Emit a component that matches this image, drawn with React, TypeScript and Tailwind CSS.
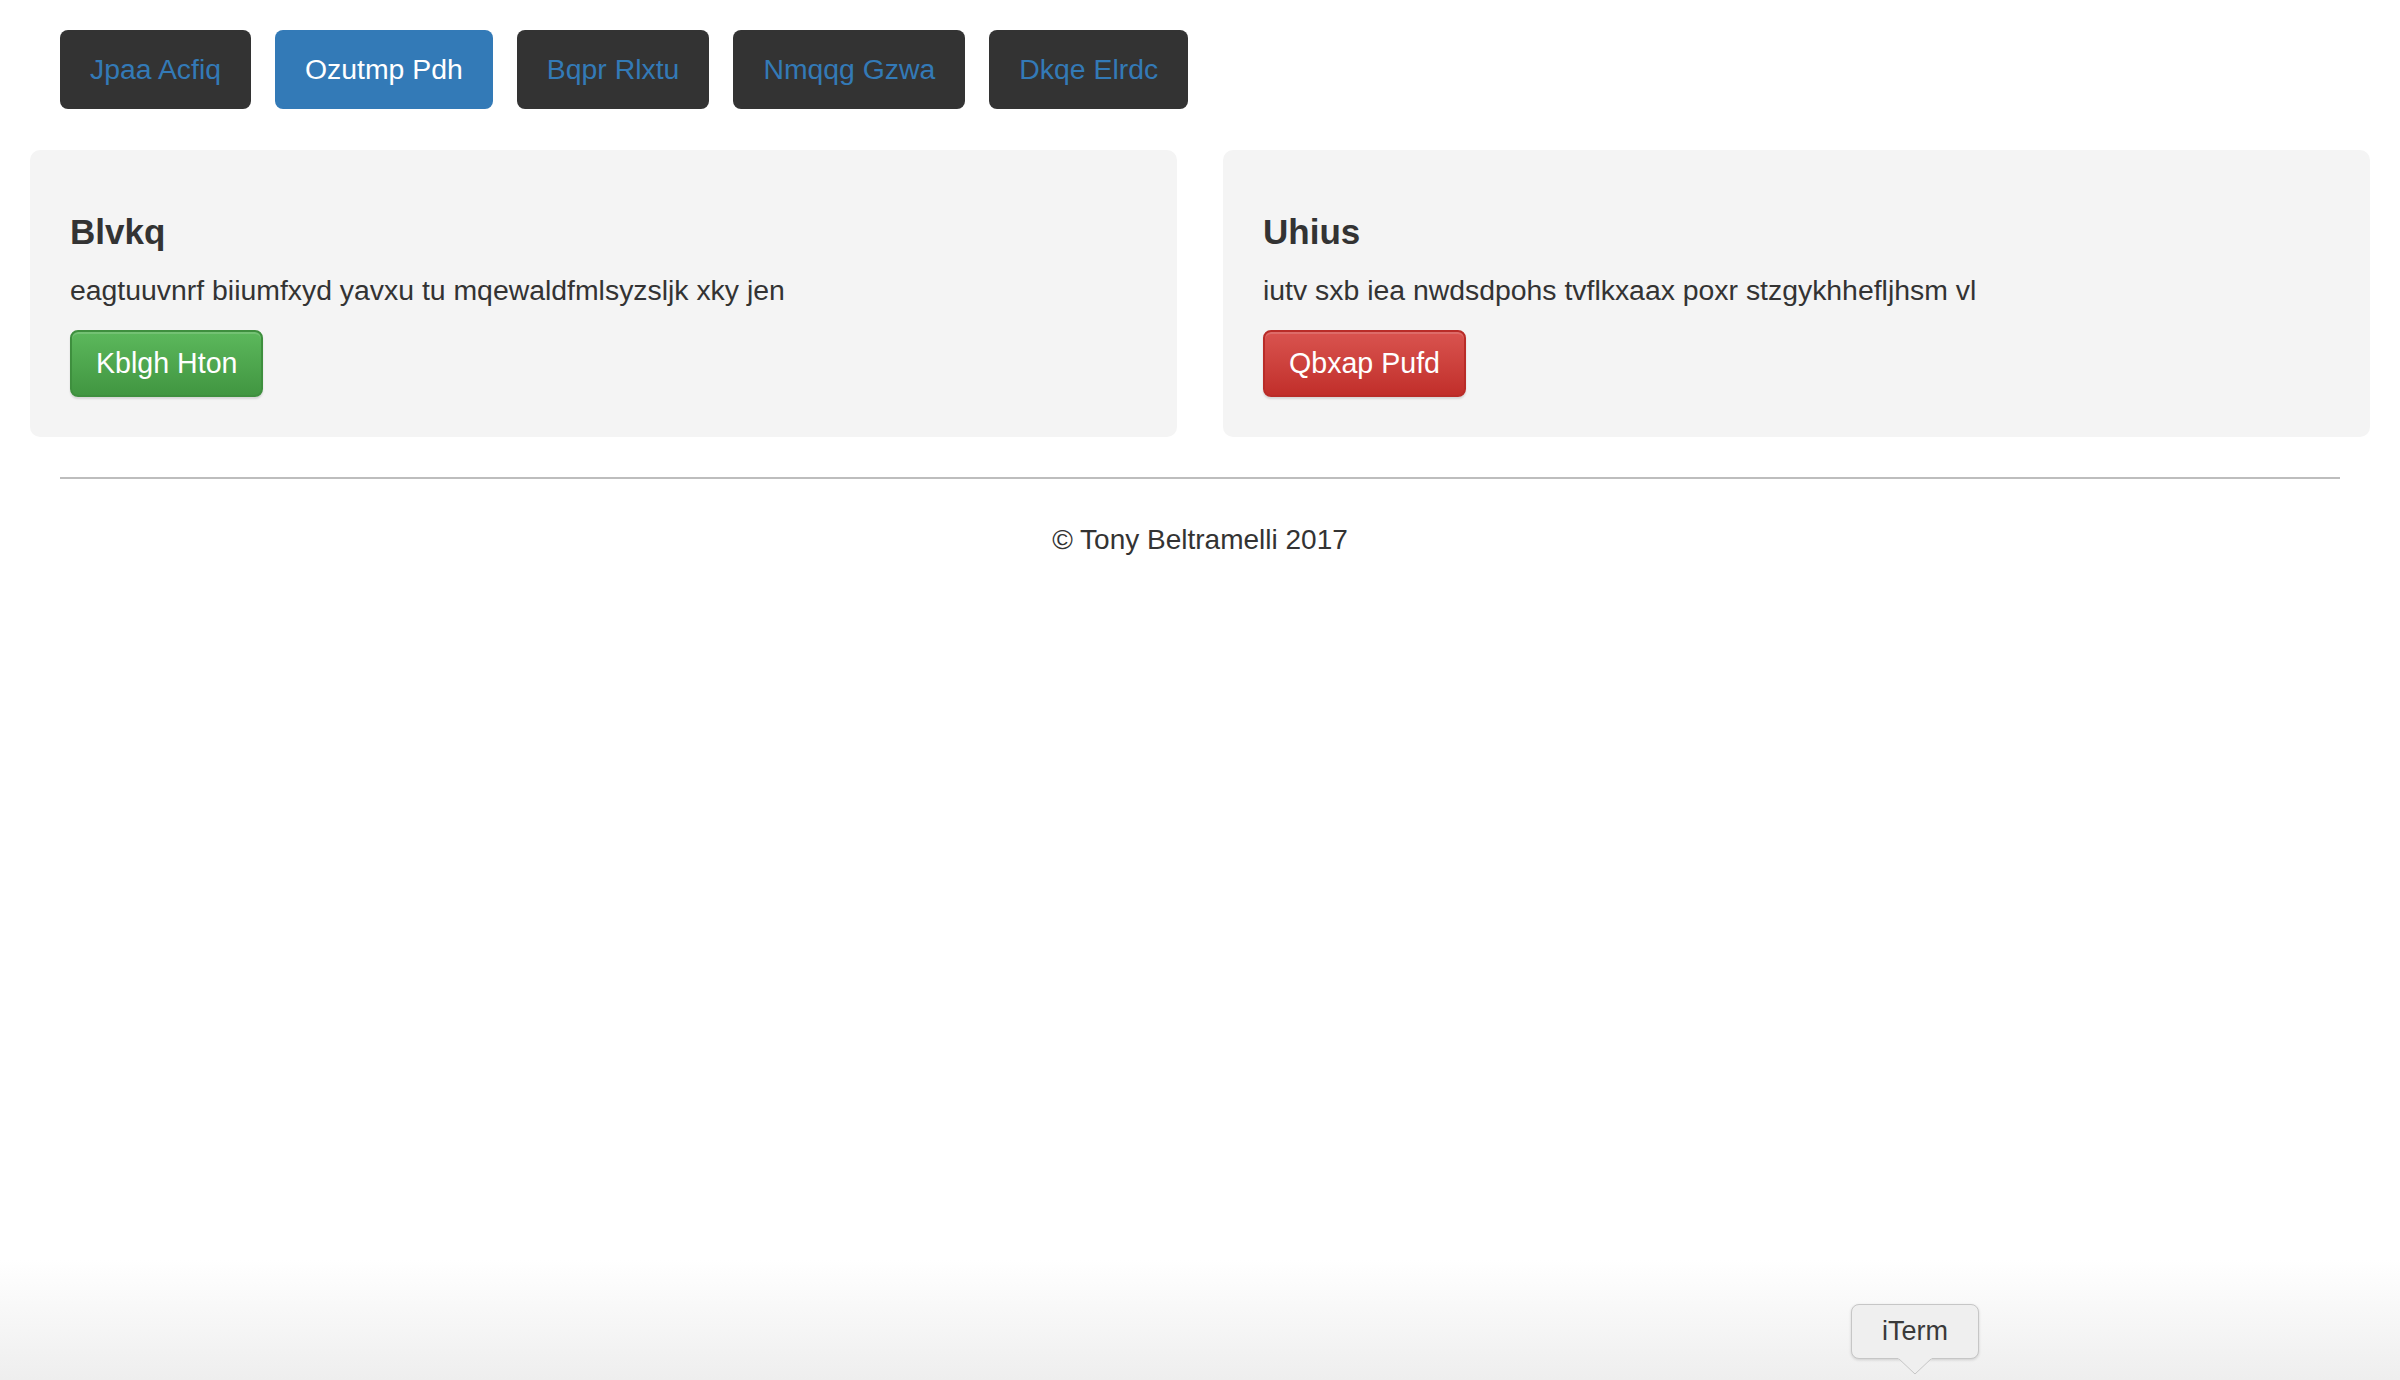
const navItems = ["Jpaa Acfiq", "Ozutmp Pdh", "Bqpr Rlxtu", "Nmqqg Gzwa", "Dkqe Elrdc"];

const cards = [
  {
    title: "Blvkq",
    text: "eagtuuvnrf biiumfxyd yavxu tu mqewaldfmlsyzsljk xky jen",
    button: "Kblgh Hton",
    tone: "green",
  },
  {
    title: "Uhius",
    text: "iutv sxb iea nwdsdpohs tvflkxaax poxr stzgykhhefljhsm vl",
    button: "Qbxap Pufd",
    tone: "red",
  },
];

export default function App() {
  return (
    <div className="relative min-h-screen bg-white text-[#333] font-['Liberation_Sans',Helvetica,Arial,sans-serif]">
      {/* Nav pills */}
      <div className="flex gap-6 px-[60px] pt-[30px]">
        {navItems.map((item, i) => (
          <a
            key={item}
            href="#"
            className={
              i === 1
                ? "h-[79px] px-[30px] flex items-center rounded-[8px] bg-[#337ab7] text-white text-[28.4px]"
                : "h-[79px] px-[30px] flex items-center rounded-[8px] bg-[#333333] text-[#337ab7] text-[28.4px]"
            }
          >
            {item}
          </a>
        ))}
      </div>

      {/* Wells */}
      <div className="flex gap-[46px] px-[30px] mt-[41px]">
        {cards.map((card) => (
          <div key={card.title} className="flex-1 rounded-[10px] bg-[#f4f4f4] px-[40px] pt-[40px] pb-[40px]">
            <h4 className="mt-[22px] mb-[18px] text-[35px] leading-[40px] font-bold">{card.title}</h4>
            <p className="text-[28.4px] leading-[40px] mb-[20px]">{card.text}</p>
            <button
              className={
                card.tone === "green"
                  ? "h-[67px] px-[24px] rounded-[8px] border-2 border-[#3e8f3e] bg-gradient-to-b from-[#5cb85c] to-[#419641] text-white text-[28.6px] shadow-[0_2px_2px_rgba(0,0,0,0.12),inset_0_2px_0_rgba(255,255,255,0.15)]"
                  : "h-[67px] px-[24px] rounded-[8px] border-2 border-[#b92c28] bg-gradient-to-b from-[#d9534f] to-[#c12e2a] text-white text-[28.6px] shadow-[0_2px_2px_rgba(0,0,0,0.12),inset_0_2px_0_rgba(255,255,255,0.15)]"
              }
            >
              {card.button}
            </button>
          </div>
        ))}
      </div>

      {/* Footer */}
      <div className="px-[60px] mt-[40px]">
        <hr className="border-0 border-t-2 border-[#bdbdbd]" />
        <p className="mt-[41px] text-center text-[28px] leading-[40px]">© Tony Beltramelli 2017</p>
      </div>

      {/* Dock shade + tooltip */}
      <div className="pointer-events-none absolute bottom-0 left-0 right-0 h-[120px] bg-gradient-to-b from-white to-[#eeeeee]" />
      <div className="pointer-events-none absolute left-[1851px] top-[1304px] flex flex-col items-center">
        <div className="w-[128px] h-[55px] flex items-center justify-center rounded-[8px] border border-[#c6c6c6] bg-[#efefef] text-[27px] text-[#3a3a3a] shadow-[0_1px_3px_rgba(0,0,0,0.15)]">
          iTerm
        </div>
        <svg width="34" height="17" viewBox="0 0 34 17" className="-mt-[1px]">
          <path d="M0 0 L17 16 L34 0" fill="#efefef" stroke="#c6c6c6" strokeWidth="1" />
          <rect x="0" y="-1" width="34" height="1.5" fill="#efefef" />
        </svg>
      </div>
    </div>
  );
}
